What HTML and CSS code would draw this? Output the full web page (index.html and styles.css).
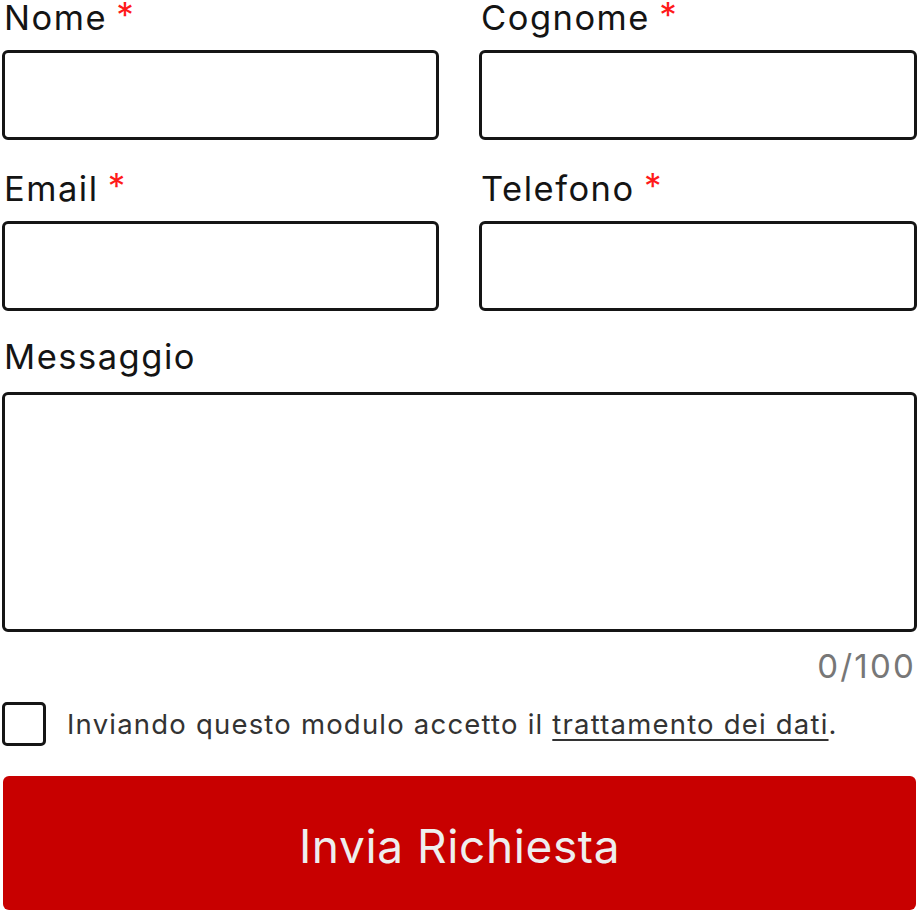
FILE: index.html
```html
<!DOCTYPE html>
<html lang="it">
<head>
<meta charset="utf-8">
<title>Modulo contatti</title>
<link rel="stylesheet" href="styles.css">
</head>
<body>
<form class="form">
  <div class="row two">
    <div class="field">
      <label class="label">Nome <span class="req">*</span></label>
      <div class="input"></div>
    </div>
    <div class="field">
      <label class="label">Cognome <span class="req">*</span></label>
      <div class="input"></div>
    </div>
  </div>
  <div class="row two">
    <div class="field">
      <label class="label">Email <span class="req">*</span></label>
      <div class="input"></div>
    </div>
    <div class="field">
      <label class="label">Telefono <span class="req">*</span></label>
      <div class="input"></div>
    </div>
  </div>
  <div class="row last">
    <div class="field">
      <label class="label">Messaggio</label>
      <div class="textarea"></div>
    </div>
  </div>
  <div class="counter">0/100</div>
  <div class="consent">
    <span class="checkbox"></span>
    <span class="consent-text">Inviando questo modulo accetto il <a class="link">trattamento dei dati</a>.</span>
  </div>
  <button type="button" class="submit">Invia Richiesta</button>
</form>
</body>
</html>
```

FILE: styles.css
```css
html, body {
  margin: 0;
  padding: 0;
  background: #ffffff;
}

.form {
  width: 915px;
  margin-left: 2px;
  font-family: Inter, Roboto, "Liberation Sans", sans-serif;
  color: #111111;
}

.row {
  margin-bottom: 31px;
}

.row.last {
  margin-bottom: 0;
}

.row.two {
  display: grid;
  grid-template-columns: 437px 438px;
  column-gap: 40px;
}

.field {
  display: flex;
  flex-direction: column;
}

.label {
  font-size: 34.5px;
  line-height: 30px;
  height: 30px;
  margin-bottom: 20px;
  padding-left: 2px;
  white-space: nowrap;
  color: #141414;
  letter-spacing: 1.5px;
  word-spacing: -2px;
}

.req {
  color: #ff1a1a;
  font-size: 35px;
  vertical-align: 2px;
  letter-spacing: 0;
}

.input {
  height: 90px;
  box-sizing: border-box;
  border: 3px solid #151515;
  border-radius: 6px;
}

.textarea {
  height: 240px;
  box-sizing: border-box;
  border: 3px solid #151515;
  border-radius: 6px;
}

.counter {
  margin-top: 19px;
  font-size: 33px;
  line-height: 30px;
  height: 30px;
  text-align: right;
  color: #777777;
  letter-spacing: 2.2px;
  padding-right: 1px;
}

.consent {
  margin-top: 21px;
  display: flex;
  align-items: center;
  gap: 21px;
}

.checkbox {
  width: 44px;
  height: 44px;
  box-sizing: border-box;
  border: 3px solid #151515;
  border-radius: 5px;
  flex: none;
}

.consent-text {
  font-size: 27.5px;
  color: #333333;
  letter-spacing: 1.2px;
  white-space: nowrap;
}

.link {
  color: #333333;
  text-decoration: underline;
  text-underline-offset: 5px;
  text-decoration-thickness: 2px;
}

.submit {
  display: block;
  margin-top: 30px;
  margin-left: 1px;
  width: 913px;
  height: 134px;
  border: none;
  border-radius: 6px;
  background: #c80000;
  color: #eeeeee;
  font-family: Inter, Roboto, "Liberation Sans", sans-serif;
  font-size: 46px;
  letter-spacing: 0.6px;
  padding: 0;
  padding-top: 6px;
}
```
